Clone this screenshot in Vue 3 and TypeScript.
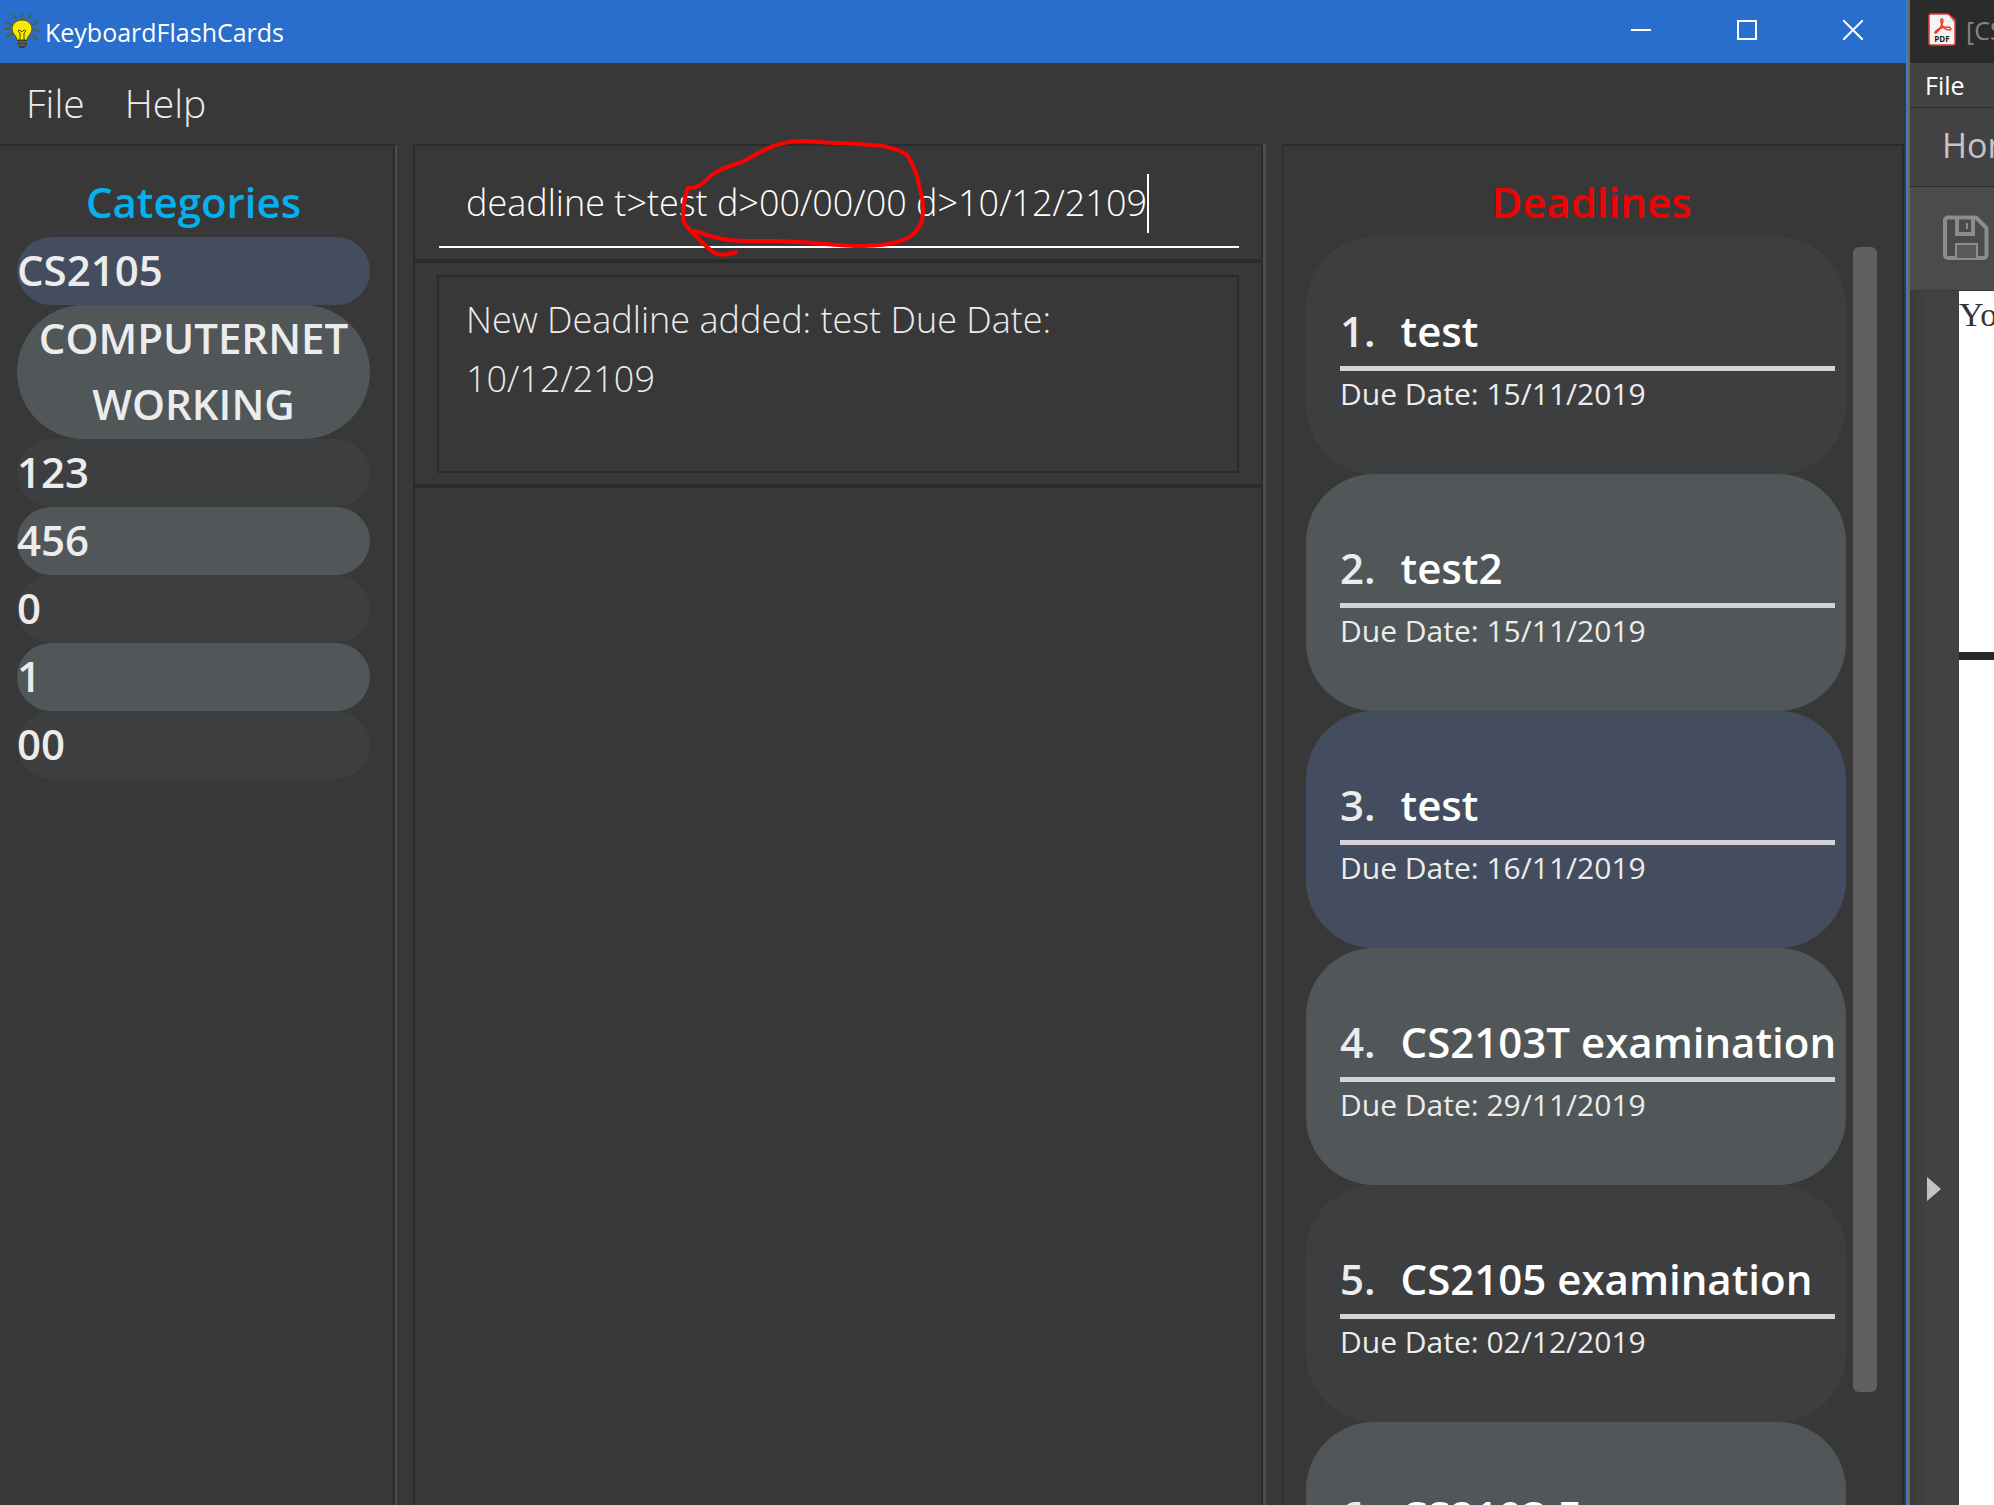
<script setup lang="ts">
import { ref } from 'vue'

interface Deadline {
  title: string
  due: string
}

const command = ref('deadline t>test d>00/00/00 d>10/12/2109')
const result = 'New Deadline added: test Due Date: 10/12/2109'
const selectedCategory = ref(0)
const selectedDeadline = ref(2)

const categories: string[][] = [
  ['CS2105'],
  ['COMPUTERNET', 'WORKING'],
  ['123'],
  ['456'],
  ['0'],
  ['1'],
  ['00'],
]

const deadlines: Deadline[] = [
  { title: 'test', due: '15/11/2019' },
  { title: 'test2', due: '15/11/2019' },
  { title: 'test', due: '16/11/2019' },
  { title: 'CS2103T examination', due: '29/11/2019' },
  { title: 'CS2105 examination', due: '02/12/2019' },
  { title: 'CS2103 E', due: '03/12/2019' },
]
</script>

<template>
  <div class="desktop">
    <section class="app-window">
      <header class="titlebar">
        <svg class="bulb" viewBox="0 0 36 36" aria-hidden="true">
          <path
            d="M18 0v6M9 1l3 5M28 1l-4 5M1 8l7 4M35 8l-6 4M0 16h7M29 17l7 1M2 24l7-3M34 27l-6-5"
            fill="none"
            stroke="#55603f"
            stroke-width="2"
          />
          <path d="M18 7c-6 0-10 4-10 9 0 5 5 7 5 11h10c0-4 5-6 5-11 0-5-4-9-10-9z" fill="#f7ea00" stroke="#5b5600" stroke-width="1" />
          <path d="M16 27v-7l-2-2 2-1 2 2 2-2 2 1-2 2v7" fill="none" stroke="#4e4a00" stroke-width="1" />
          <path d="M13 27h10v5l-3 3h-4l-3-3z" fill="#3b3b3b" />
          <path d="M13 29h10M13 32h9" stroke="#777" stroke-width="1" />
        </svg>
        <h1>KeyboardFlashCards</h1>
        <div class="controls">
          <button type="button" aria-label="Minimize">
            <svg viewBox="0 0 20 20"><path d="M0 10h20" /></svg>
          </button>
          <button type="button" aria-label="Maximize">
            <svg viewBox="0 0 20 20"><path d="M1 1h18v18H1z" /></svg>
          </button>
          <button type="button" aria-label="Close">
            <svg viewBox="0 0 20 20"><path d="M0 0l20 20M20 0L0 20" /></svg>
          </button>
        </div>
      </header>

      <nav class="menubar">
        <button type="button">File</button>
        <button type="button">Help</button>
      </nav>

      <main class="panes">
        <aside class="pane categories">
          <h2>Categories</h2>
          <ul>
            <li
              v-for="(lines, i) in categories"
              :key="i"
              :class="{ selected: i === selectedCategory, wrapped: lines.length > 1 }"
              @click="selectedCategory = i"
            >
              <span v-for="line in lines" :key="line">{{ line }}</span>
            </li>
          </ul>
        </aside>

        <section class="pane center">
          <div class="command">
            <input v-model="command" type="text" aria-label="Command" spellcheck="false" />
            <div class="caret-track" aria-hidden="true"><span>{{ command }}</span><i></i></div>
            <svg class="scribble" viewBox="0 0 250 124" aria-hidden="true">
              <path d="M58 120C52 122 42 124 37 121C28 116 21 107 12 98C7 92 5 91 5 86C5 76 7 62 10 56C25 57 28 44 42 38C52 33 58 33 68 28C86 18 98 10 122 9C136 9 146 11 162 11C180 12 196 13 205 14C213 16 223 18 229 23C236 34 239 42 241 52C242 60 245 66 245 76C244 86 246 88 242 93C234 110 214 113 185 114C155 114 130 109 95 109C60 109 50 111 17 99" />
            </svg>
          </div>
          <div class="result">
            <output>{{ result }}</output>
          </div>
          <div class="blank"></div>
        </section>

        <aside class="pane deadlines">
          <h2>Deadlines</h2>
          <div class="scroll-area">
            <ol>
              <li
                v-for="(d, i) in deadlines"
                :key="i"
                :class="{ selected: i === selectedDeadline }"
                @click="selectedDeadline = i"
              >
                <div class="name"><span>{{ i + 1 }}.</span><strong>{{ d.title }}</strong></div>
                <p>Due Date: {{ d.due }}</p>
              </li>
            </ol>
            <div class="scrollbar"><div class="thumb"></div></div>
          </div>
        </aside>
      </main>
    </section>

    <section class="pdf-window">
      <header class="pdf-title">
        <svg viewBox="0 0 28 33" aria-hidden="true">
          <path d="M3 1h17l7 6v23a2 2 0 0 1-2 2H3a2 2 0 0 1-2-2V3a2 2 0 0 1 2-2z" fill="#f6f4f3" stroke="#e2413a" stroke-width="1.500" />
          <path d="M20 1l7 6v3z" fill="#e2413a" />
          <path d="M14 6c-2 0-1 4 0 6 2 4 4 5 7 5s2-3-1-3c-4 0-9 1-12 4-2 2-1 3 1 1 3-3 5-7 6-11 0-2 0-2-1-2z" fill="none" stroke="#e8352d" stroke-width="1.500" />
          <text x="14" y="29" text-anchor="middle">PDF</text>
        </svg>
        <span>[CS</span>
      </header>
      <nav class="pdf-menu"><button type="button">File</button></nav>
      <div class="pdf-tabs"><button type="button">Home</button></div>
      <div class="pdf-tools">
        <button type="button" aria-label="Save">
          <svg viewBox="0 0 46 46">
            <path d="M4 2.500h29L43.500 13v27a3 3 0 0 1-3 3H5a3 3 0 0 1-3-3V4.500z" fill="#4b4b4b" stroke="#8c8c8c" stroke-width="4" stroke-linejoin="round" />
            <path d="M14 3v16h16V3" fill="none" stroke="#8c8c8c" stroke-width="4" />
            <path d="M24 8v6" stroke="#8c8c8c" stroke-width="2" />
            <path d="M13 43V29h21v14" fill="#5a5a5a" stroke="#8c8c8c" stroke-width="2" />
          </svg>
        </button>
      </div>
      <div class="pdf-body">
        <button type="button" class="expander" aria-label="Show side pane">
          <svg viewBox="0 0 14 24"><path d="M0 0l14 12L0 24z" /></svg>
        </button>
        <div class="pages">
          <article class="page first">You</article>
          <article class="page"></article>
        </div>
      </div>
    </section>
  </div>
</template>

<style>
body {
  margin: 0;
  background: #383838;
  overflow: hidden;
}
</style>

<style scoped>
* {
  box-sizing: border-box;
}

.desktop {
  display: flex;
  height: 100vh;
  font-family: "Open Sans", "Noto Sans", sans-serif;
  overflow: hidden;
}

button {
  border: 0;
  padding: 0;
  background: none;
  color: inherit;
  font: inherit;
}

h1,
h2,
p,
ul,
ol {
  margin: 0;
  padding: 0;
  list-style: none;
}

/* Flash card window */
.app-window {
  flex: 1;
  min-width: 0;
  display: flex;
  flex-direction: column;
  background: #383838;
  color: #ececec;
  border-right: 2px solid #3f78cc;
}

.titlebar {
  flex: none;
  display: flex;
  align-items: center;
  height: 63px;
  padding-left: 4px;
  background: #296dcd;
  color: #fff;
}

.bulb {
  width: 36px;
  height: 36px;
  margin-bottom: 2px;
}

h1 {
  flex: 1;
  padding-left: 5px;
  font-size: 25px;
  font-weight: 400;
  line-height: 32px;
}

.controls {
  display: flex;
  align-self: flex-start;
}

.controls button {
  width: 106px;
  height: 60px;
  display: grid;
  place-items: center;
}

.controls svg {
  width: 20px;
  height: 20px;
  fill: none;
  stroke: #fff;
  stroke-width: 2;
}

.menubar {
  flex: none;
  display: flex;
  gap: 40px;
  height: 81px;
  padding: 0 0 3px 26px;
  font-size: 39px;
  font-weight: 300;
}

.panes {
  flex: 1;
  min-height: 0;
  display: grid;
  grid-template-columns: 397fr 853fr 624fr;
  gap: 16px;
}

.pane {
  min-width: 0;
  min-height: 0;
}

h2 {
  font-size: 42px;
  font-weight: 600;
  line-height: 58px;
  text-align: center;
}

.categories {
  padding: 27px 25px 0 17px;
  border-top: 2px solid #2b2b2b;
  border-right: 2px solid #4d4d4d;
  box-shadow: inset -2px 0 #2b2b2b;
}

.categories h2 {
  color: #05b0ee;
  margin-bottom: 6px;
}

.categories li {
  min-height: 68px;
  padding-bottom: 2px;
  border-radius: 68px;
  background: #3d3e3f;
  font-size: 42px;
  font-weight: 600;
  line-height: 66px;
}

.categories li span {
  display: block;
}

.categories li.wrapped {
  text-align: center;
}

.categories li:nth-child(even),
.deadlines li:nth-child(even) {
  background: #515658;
}

.categories li.selected,
.deadlines li.selected {
  background: #434d5f;
}

.center {
  display: flex;
  flex-direction: column;
  border-right: 3px solid #4d4d4d;
  font-size: 36px;
  font-weight: 300;
}

.command,
.result,
.blank {
  border: 2px solid #2b2b2b;
}

.command {
  position: relative;
  flex: none;
  height: 117px;
  padding: 14px 22px 0 24px;
}

.command input {
  display: block;
  width: 100%;
  height: 88px;
  padding: 0 28px 1px 27px;
  border: 0;
  border-bottom: 2px solid #fff;
  outline: 0;
  background: none;
  color: #fff;
  font: inherit;
}

.caret-track {
  position: absolute;
  left: 51px;
  top: 28px;
  display: flex;
  height: 59px;
  white-space: pre;
}

.caret-track span {
  visibility: hidden;
}

.caret-track i {
  width: 2px;
  background: #fff;
}

.scribble {
  position: absolute;
  left: 263px;
  top: -14px;
  width: 250px;
  height: 124px;
  overflow: visible;
  fill: none;
  stroke: #f00;
  stroke-width: 4;
  stroke-linecap: round;
  stroke-linejoin: round;
}

.result {
  flex: none;
  height: 225px;
  padding: 12px 22px 11px;
}

.result output {
  display: block;
  height: 100%;
  padding: 13px 27px;
  border: 2px solid #2b2b2b;
  line-height: 59px;
}

.blank {
  flex: 1;
  border-bottom: 0;
}

.deadlines {
  display: flex;
  flex-direction: column;
  margin-right: 2px;
  padding: 27px 25px 0 23px;
  border: 2px solid #2b2b2b;
  border-left-width: 1px;
  border-bottom: 0;
}

.deadlines h2 {
  color: #eb0505;
  margin-bottom: 6px;
}

.scroll-area {
  flex: 1;
  min-height: 0;
  display: flex;
  gap: 7px;
}

ol {
  flex: 1;
  min-width: 0;
}

.deadlines li {
  height: 237px;
  padding: 64px 11px 0 34px;
  border-radius: 68px;
  background: #3d3e3f;
}

.name {
  display: flex;
  gap: 25px;
  height: 70px;
  border-bottom: 5px solid #d4d4d4;
  font-size: 42px;
  font-weight: 600;
  line-height: 60px;
  white-space: nowrap;
}

.name strong {
  color: #fff;
  font-weight: 600;
}

.deadlines p {
  font-size: 30px;
  line-height: 46px;
}

.scrollbar {
  flex: none;
  width: 24px;
  padding-top: 10px;
}

.thumb {
  height: 91%;
  border-radius: 6px;
  background: #606060;
}

/* PDF reader behind it */
.pdf-window {
  flex: none;
  width: 86px;
  display: flex;
  flex-direction: column;
  border-left: 2px solid #686868;
  background: #424242;
  color: #fff;
  overflow: hidden;
  white-space: nowrap;
}

.pdf-title {
  flex: none;
  display: flex;
  align-items: center;
  gap: 10px;
  height: 63px;
  padding: 0 0 4px 18px;
  background: #2b2b2b;
  color: #858585;
  font-size: 25px;
}

.pdf-title svg {
  flex: none;
  width: 28px;
  height: 33px;
}

.pdf-title text {
  fill: #222;
  font: 700 8px "Open Sans", sans-serif;
}

.pdf-menu {
  flex: none;
  height: 45px;
  padding-left: 15px;
  border-bottom: 1px solid #2b2b2b;
  font-size: 25px;
  line-height: 44px;
}

.pdf-tabs {
  flex: none;
  height: 79px;
  padding-left: 32px;
  border-bottom: 1px solid #2b2b2b;
  color: #c4c4c4;
  font-size: 34px;
  line-height: 74px;
}

.pdf-tools {
  flex: none;
  height: 104px;
  padding: 28px 0 0 33px;
  border-bottom: 1px solid #383838;
  background: #4b4b4b;
}

.pdf-tools svg {
  display: block;
  width: 46px;
  height: 46px;
}

.pdf-body {
  flex: 1;
  min-height: 0;
  display: flex;
  background: linear-gradient(to right, #3b3b3b, #424242 16px);
}

.expander {
  flex: none;
  width: 49px;
  padding: 886px 0 0 17px;
  display: flex;
  align-items: flex-start;
}

.expander svg {
  width: 14px;
  height: 24px;
  fill: #c4c4c4;
}

.pages {
  flex: 1;
  display: flex;
  flex-direction: column;
  gap: 8px;
  background: #262626;
}

.page {
  flex: 1;
  background: #fff;
  color: #333;
  font: 34px/48px "Liberation Serif", serif;
}

.page.first {
  flex: none;
  height: 361px;
}
</style>
